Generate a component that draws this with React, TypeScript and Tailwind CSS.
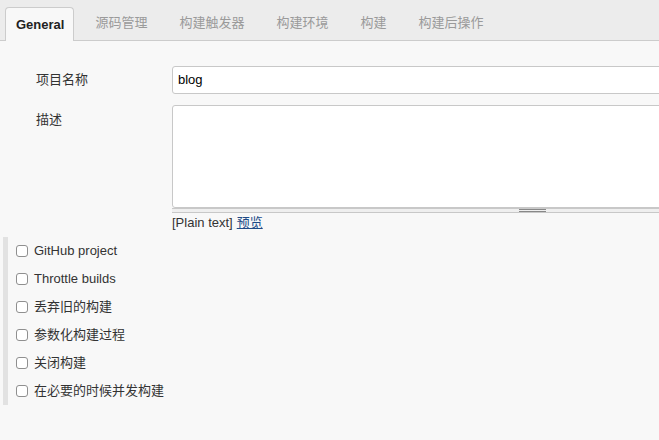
import React from "react";

const tabs = ["源码管理", "构建触发器", "构建环境", "构建", "构建后操作"];
const checks = ["GitHub project", "Throttle builds", "丢弃旧的构建", "参数化构建过程", "关闭构建", "在必要的时候并发构建"];

export default function App() {
  return (
    <div
      className="w-[659px] h-[440px] overflow-hidden bg-[#f8f8f8] text-[13px] text-[#333]"
      style={{ fontFamily: '"Liberation Sans", "Noto Sans CJK SC", sans-serif' }}
    >
      <div className="h-[41px] bg-[#ececec] border-b border-[#cccccc] flex items-end pl-[5px] gap-[10px]">
        <div className="h-[34px] -mb-px pl-[10px] pr-[9px] flex items-center bg-[#f8f8f8] border border-b-0 border-[#cccccc] rounded-t-[4px] font-bold text-[#222]">
          General
        </div>
        {tabs.map((t) => (
          <div key={t} className="h-[34px] px-[11px] flex items-center text-[#9a9a9a]">
            {t}
          </div>
        ))}
      </div>
      <div className="pt-[25px] pl-[36px]">
        <div className="flex">
          <div className="w-[136px] shrink-0 h-[28px] flex items-center">项目名称</div>
          <div className="w-[600px] shrink-0 h-[28px] bg-white border border-[#c8c8c8] rounded-[3px] flex items-center pl-[5px] text-black">
            blog
          </div>
        </div>
        <div className="flex mt-[11px]">
          <div className="w-[136px] shrink-0 pt-[5px]">描述</div>
          <div className="flex flex-col shrink-0">
            <div className="w-[600px] h-[103px] bg-white border border-[#c8c8c8] rounded-[3px]"></div>
            <div className="w-[600px] h-[5px] bg-[#efefef] border-t border-b border-[#c8c8c8] relative">
              <div className="absolute left-[347px] top-0 w-[27px] h-[3px] border-t border-b border-[#888]"></div>
            </div>
            <div className="h-[18px] flex items-center mt-px">
              <span>[Plain text]</span>
              <span className="ml-[4px] text-[#204a87] underline">预览</span>
            </div>
          </div>
        </div>
      </div>
      <div className="ml-[3px] mt-[5px] w-[600px] border-l-[5px] border-[#e2e2e2]">
        {checks.map((c) => (
          <div key={c} className="h-[28px] flex items-center pl-[8px]">
            <div className="w-[12px] h-[12px] bg-white border border-[#8f8f8f] rounded-[3px]"></div>
            <span className="ml-[6px]">{c}</span>
          </div>
        ))}
      </div>
    </div>
  );
}
